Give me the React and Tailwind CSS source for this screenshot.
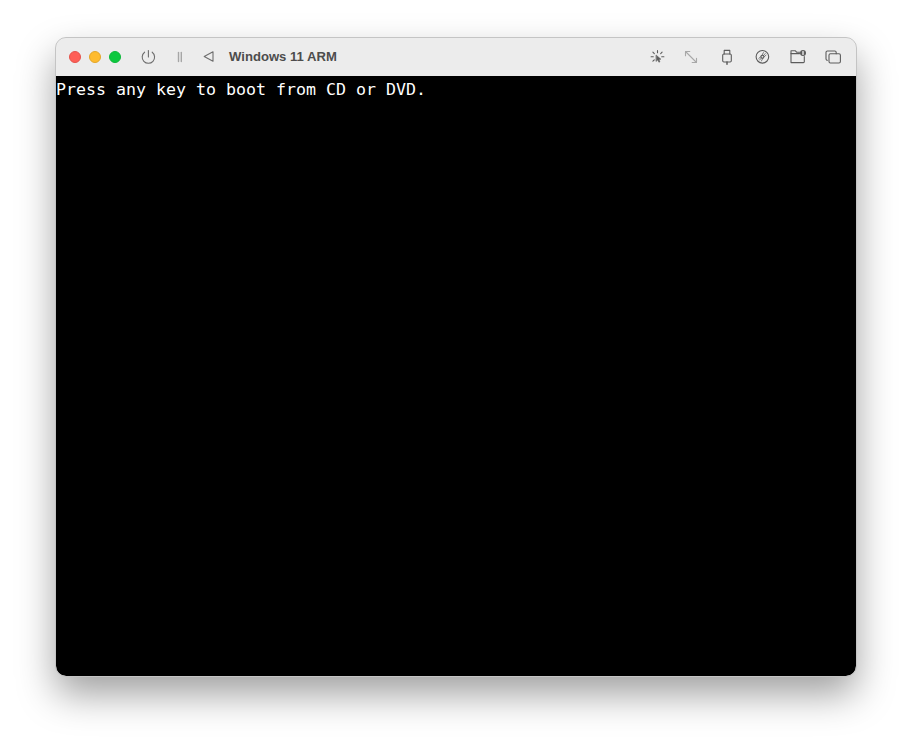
const Icon = ({ children, className = '' }) => (
  <svg width="20" height="20" viewBox="0 0 20 20" fill="none" stroke="currentColor" strokeWidth="1.1" strokeLinecap="round" strokeLinejoin="round" className={className}>
    {children}
  </svg>
);

const App = () => {
  return (
    <div className="w-[912px] h-[750px] bg-white overflow-hidden pt-[38px] pl-[56px]">
      <div className="w-[800px] h-[638px] rounded-[10px] overflow-hidden flex flex-col shadow-[0_18px_38px_rgba(0,0,0,0.38)] outline outline-1 outline-[#c4c4c4]">
        {/* Title bar */}
        <div className="h-[38px] shrink-0 bg-[#ececec] flex items-center pl-[13px] font-['Liberation_Sans',sans-serif]">
          <div className="flex items-center gap-2">
            <span className="w-3 h-3 rounded-full bg-[#fe5f57] border border-[#e5534c]" />
            <span className="w-3 h-3 rounded-full bg-[#febb2e] border border-[#e3a629]" />
            <span className="w-3 h-3 rounded-full bg-[#0dc83f] border border-[#0db83a]" />
          </div>

          <div className="flex items-center text-[#6e6e6e] ml-[17px]">
            {/* power */}
            <Icon>
              <path d="M10.4 3.5v6.5" />
              <path d="M6.6 5.2a6.2 6.2 0 1 0 7.6 0" />
            </Icon>
            {/* pause */}
            <Icon className="ml-[12px] text-[#a6a6a6]">
              <path d="M8.5 5.5v9" strokeWidth="1.4" />
              <path d="M11.3 5.5v9" strokeWidth="1.4" />
            </Icon>
            {/* back */}
            <Icon className="ml-[9px]">
              <path d="M14 4.8v9.4L5.2 9.5z" />
            </Icon>
          </div>

          <span className="ml-[10px] text-[13.1px] font-bold text-[#4d4d4d]">Windows 11 ARM</span>

          <div className="ml-auto mr-[13px] flex items-center gap-[15.5px] text-[#5c5c5c]">
            {/* activity + pointer */}
            <Icon>
              <g transform="translate(1.5 0)">
                <path d="M10 3.5v2.2M5.4 5.2l1.4 1.4M3.6 9.8h2.2M5.4 14.2l1.4-1.3M14.6 5.2l-1.4 1.4M14.2 9.8h2.2" />
                <path d="M8.8 8.2l4.6 4-2 .2 1 2.4-1 .4-1-2.4-1.6 1.4z" fill="currentColor" strokeWidth="0.6" />
              </g>
            </Icon>
            {/* resize */}
            <Icon className="text-[#a8a8a8]">
              <path d="M4.5 4.5l11 11" />
              <path d="M4.5 8.8V4.5h4.3" />
              <path d="M15.5 11.2v4.3h-4.3" />
            </Icon>
            {/* usb */}
            <Icon>
              <path d="M7.2 7V3.4h5.6V7" />
              <rect x="5.7" y="7" width="8.6" height="8" rx="1.2" />
              <path d="M10 15v2.2" strokeWidth="1.5" />
            </Icon>
            {/* disc */}
            <Icon>
              <circle cx="10.4" cy="9.8" r="6.3" />
              <circle cx="10.4" cy="9.8" r="1.5" />
              <path d="M6.8 11.4l2.3-1.9M7.6 13l2-2.2M9.4 14l1.5-2.8M14 8.2l-2.3 1.9M13.2 6.6l-2 2.2M11.4 5.6l-1.5 2.8" strokeWidth="0.8" />
            </Icon>
            {/* shared folder */}
            <Icon>
              <path d="M12 5.2H8.6L7.4 3.8H3v11.8h12.4a.9.9 0 0 0 .9-.9V9.6" />
              <path d="M3 6.6h8.6" />
              <circle cx="15" cy="6" r="3" fill="currentColor" stroke="none" />
              <path d="M15 4.6v2.8" stroke="#ececec" strokeWidth="1.4" />
            </Icon>
            {/* windows */}
            <Icon>
              <path d="M4.4 13.2A1.4 1.4 0 0 1 3 11.8V5.4A1.4 1.4 0 0 1 4.4 4h7.4a1.4 1.4 0 0 1 1.4 1.4v1.4" />
              <rect x="6" y="6.8" width="11.4" height="9.2" rx="1.4" />
            </Icon>
          </div>
        </div>

        {/* Screen */}
        <div className="flex-1 bg-black text-white font-['DejaVu_Sans_Mono',monospace] text-[16.61px] leading-[27px] whitespace-pre">
          Press any key to boot from CD or DVD.
        </div>
      </div>
    </div>
  );
};

export default App;
